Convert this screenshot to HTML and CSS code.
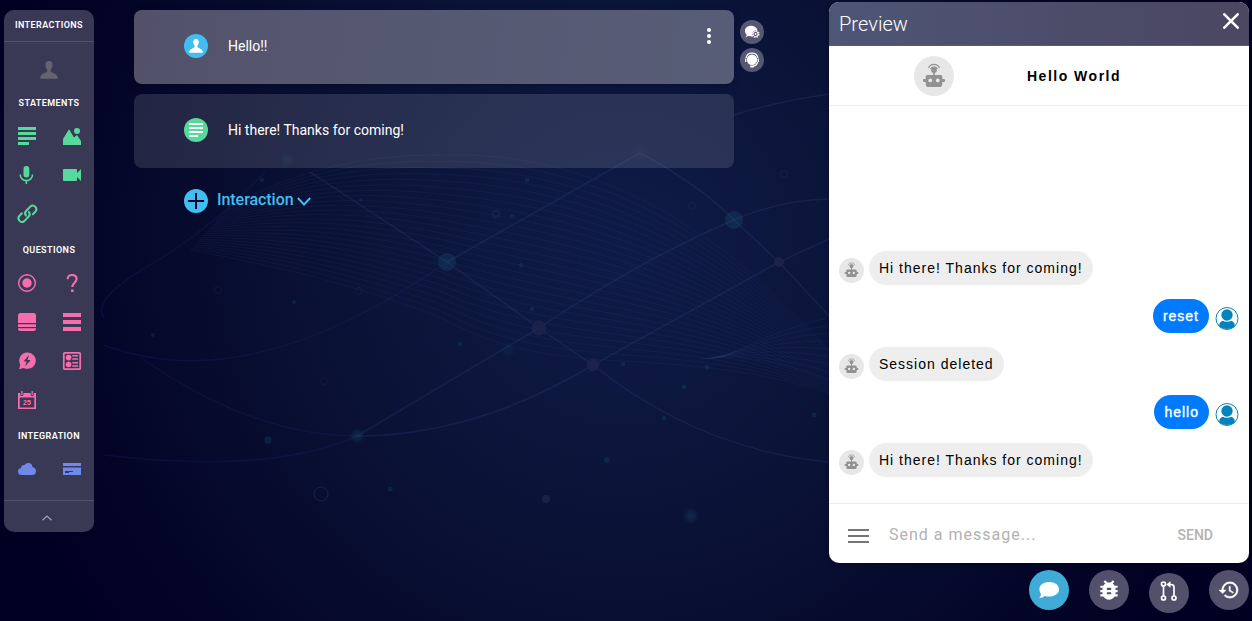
FILE: index.html
```html
<!DOCTYPE html>
<html lang="en">
<head>
<meta charset="utf-8">
<title>Interactions</title>
<link rel="stylesheet" href="styles.css">
</head>
<body>
<svg class="backdrop" viewBox="0 0 1252 621" aria-hidden="true">
  <defs>
    <symbol id="person" viewBox="0 0 18 18"><path d="M9 0C6.400 0 5.300 1.600 5.400 4.200c.1 2 .8 3.400 1.800 4.200.1.900.1 1.900-.4 2.500C5.600 12 .2 12.300.1 17.800h17.800c-.1-5.500-5.500-5.800-6.700-6.900-.5-.6-.5-1.600-.4-2.500 1-.8 1.700-2.200 1.800-4.200C12.700 1.600 11.600 0 9 0z"/></symbol>
    <symbol id="lines" viewBox="0 0 18 18"><path d="M0 0h18v3H0zM0 5h18v3H0zM0 10h18v3H0zM0 15h11v3H0z"/></symbol>
    <symbol id="robot" viewBox="0 0 24 24"><path d="M6.500 5A6 6 0 0 1 17.500 5M8.400 6a4 4 0 0 1 7.200 0" fill="none" stroke="currentColor" stroke-width="1.100"/><circle cx="12" cy="7" r="2.900"/><path d="M11.200 8h1.600v5h-1.600z"/><path fill-rule="evenodd" d="M5.500 12h13q1.800 0 1.800 1.500V16h1.700q1 0 1 .9v1.200q0 .9-1 .9h-1.700v2q0 3.200-3.300 3.200H7q-3.300 0-3.300-3.200v-2H2q-1 0-1-.9v-1.200q0-.9 1-.9h1.700v-2.500Q3.700 12 5.500 12zM8.200 15.500a1.900 1.900 0 1 0 0 3.800 1.900 1.900 0 0 0 0-3.800zM15.800 15.500a1.900 1.900 0 1 0 0 3.800 1.900 1.900 0 0 0 0-3.800z"/></symbol>
    <symbol id="user" viewBox="0 0 24 24"><circle cx="12" cy="12" r="11" fill="#fff" stroke="currentColor" stroke-width="1"/><circle cx="12" cy="8.500" r="5.700"/><path d="M4.300 20.500q-.6-5 3.300-6.300 4.400 2.200 8.800 0 3.900 1.300 3.300 6.300Q16 22.600 12 22.600t-7.700-2.100z"/></symbol>
    <filter id="soft"><feGaussianBlur stdDeviation="2"/></filter>
  </defs>
  <g id="waves" class="waves"></g>
  <g class="orbits">
    <path class="faint" d="M104 318Q90 300 150 265T265 172M104 345Q250 400 447 262"/>
    <path d="M447 262L640 153"/>
    <path d="M310 172L447 262 539 328 593 365Q700 450 829 462"/>
    <path class="faint" d="M140 357Q250 435 357 436"/>
    <path d="M357 436Q475 436 593 365L779 262 829 239"/>
    <path class="faint" d="M104 455Q270 475 357 436"/>
    <path d="M357 436L539 328Q640 260 734 220 780 200 829 199"/>
    <path d="M640 153Q700 185 734 220L779 262 829 316"/>
    <path d="M734 115Q770 103 829 94"/>
  </g>
  <g class="stars">
    <circle cx="447" cy="262" r="9"/><circle cx="734" cy="220" r="9"/>
    <circle cx="357" cy="436" r="6" filter="url(#soft)"/><circle class="dim" cx="508" cy="350" r="6" filter="url(#soft)"/>
    <circle cx="691" cy="516" r="6" filter="url(#soft)"/>
    <circle cx="268" cy="440" r="3.500"/><circle cx="390" cy="489" r="2.500"/><circle cx="294" cy="302" r="2"/>
    <circle cx="153" cy="335" r="2"/><circle cx="607" cy="460" r="2.800"/><circle cx="684" cy="387" r="2.400"/>
    <circle cx="707" cy="367" r="2.400"/><circle cx="532" cy="309" r="2.200"/><circle cx="521" cy="265" r="2"/>
    <circle cx="512" cy="216" r="2"/><circle cx="527" cy="180" r="2.300"/><circle cx="460" cy="344" r="2.200"/>
    <circle cx="623" cy="364" r="2.200"/><circle cx="664" cy="418" r="2.200"/><circle cx="814" cy="415" r="2.400"/>
    <circle cx="262" cy="180" r="2.200"/><circle cx="361" cy="200" r="1.700"/><circle class="dim" cx="287" cy="160" r="6" filter="url(#soft)"/>
  </g>
  <g class="nodes">
    <circle cx="539" cy="328" r="7.500"/><circle cx="593" cy="365" r="6.500"/><circle cx="779" cy="262" r="5"/>
    <circle cx="546" cy="499" r="4.200"/><circle class="dim" cx="640" cy="153" r="7" filter="url(#soft)"/>
  </g>
  <g class="rings">
    <circle class="bright" cx="321" cy="494" r="7"/><circle cx="218" cy="290" r="3.500"/><circle cx="359" cy="291" r="3.500"/>
    <circle cx="324" cy="381" r="3.500"/><circle class="bright" cx="496" cy="214" r="3.500"/><circle cx="692" cy="206" r="3.500"/><circle cx="784" cy="174" r="3.500"/>
  </g>
</svg>

<div class="app">
  <aside class="palette">
    <h2 class="palette-title">INTERACTIONS</h2>
    <div class="palette-user"><svg width="18" height="18"><use href="#person"/></svg></div>
    <h3 class="group-title first">STATEMENTS</h3>
    <div class="group green">
      <svg viewBox="0 0 18 18"><use href="#lines"/></svg>
      <svg viewBox="0 0 18 18"><path d="M0 18v-6L6 2.200 11 10.500l3-2.500 4 6V18z"/><circle cx="14" cy="4" r="3"/></svg>
      <svg viewBox="0 0 18 18"><rect x="5.500" y="0" width="5.800" height="11.500" rx="2.900"/><path d="M2.200 8.500a6.100 6.100 0 0 0 12.300 0M8.350 14.500V18" fill="none" stroke="currentColor" stroke-width="1.600"/></svg>
      <svg viewBox="0 0 18 18"><path d="M1 3h12q1 0 1 1v3l4-4v12l-4-4v3q0 1-1 1H1q-1 0-1-1V4q0-1 1-1z"/></svg>
      <svg viewBox="0 0 18 18"><g fill="none" stroke="currentColor" stroke-width="2" stroke-linecap="round" transform="translate(.4 -.6)"><path d="M7.600 11.200A3.600 3.600 0 0 1 7.900 6.300L12.100 2A3.600 3.600 0 0 1 17.200 7L14.500 9.800"/><path d="M10.400 7.500a3.600 3.600 0 0 1-.3 4.900L5.900 16.700A3.600 3.600 0 0 1 .8 11.700L3.500 8.900"/></g></svg>
    </div>
    <h3 class="group-title">QUESTIONS</h3>
    <div class="group pink">
      <svg viewBox="0 0 18 18"><circle cx="9" cy="9" r="8.300" fill="none" stroke="currentColor" stroke-width="1.400"/><circle cx="9" cy="9" r="4.700"/></svg>
      <svg viewBox="0 0 18 18"><path d="M4.600 5.200C4.600 2.500 6.300 1 9 1s4.600 1.500 4.600 4c0 3.400-4.300 4-4.300 8" fill="none" stroke="currentColor" stroke-width="2.100"/><path d="M8.100 15.500h2.500V18H8.100z"/></svg>
      <svg viewBox="0 0 18 18"><path d="M2.500 0h13Q18 0 18 2.500V10H0V2.500Q0 0 2.500 0zM0 11.300h18V14H0zM0 15.200h18v.8q0 2-2.500 2h-13Q0 18 0 16z"/></svg>
      <svg viewBox="0 0 18 18"><path d="M0 0h18v4H0zM0 7h18v4H0zM0 14h18v4H0z"/></svg>
      <svg viewBox="0 0 18 18"><path fill-rule="evenodd" d="M9.300.4a8.200 8.200 0 1 1-3.500 15.500L1 17.200l1.300-4.500A8.200 8.200 0 0 1 9.300.4zM11 3L5.500 9.500h3.200L7 14.500 12.700 8H9.500z"/></svg>
      <svg viewBox="0 0 18 18"><rect x=".8" y=".8" width="16.400" height="16.400" rx=".8" fill="none" stroke="currentColor" stroke-width="1.700"/><circle cx="5.600" cy="5.600" r="2.800"/><circle cx="5.600" cy="12.500" r="2.800"/><path d="M9.300 3H15v1.600H9.300zM9.300 6.200H15v1.600H9.300zM9.300 10H15v1.600H9.300zM9.300 13.200H15v1.600H9.300z"/></svg>
      <svg viewBox="0 0 18 18"><path fill-rule="evenodd" d="M0 2h2.200v1.700q0 1.300 1.600 1.300t1.600-1.300V2h7.200v1.700q0 1.300 1.600 1.300t1.600-1.300V2H18v16H0zM1.700 6.500v9.900h14.600V6.500z"/><path d="M3.200 0h1.300v4H3.200zM13.500 0h1.300v4h-1.300z"/><text x="9" y="14" class="date">25</text></svg>
    </div>
    <h3 class="group-title">INTEGRATION</h3>
    <div class="group blue">
      <svg viewBox="0 0 18 18"><path d="M4 15Q0 15 0 11.500 0 8.600 3 8q0-3 3.400-3 1-2 4-2Q14 3 14.500 7 18 8 18 11.300 18 15 14 15z"/></svg>
      <svg viewBox="0 0 18 18"><path fill-rule="evenodd" d="M0 3h18v3H0zM0 7.500h18V15H0zM2 12v1h4v-1zM2 11h8v1H2z"/></svg>
    </div>
    <div class="palette-foot"><svg width="10" height="6" viewBox="0 0 10 6"><path d="M.5 5.300L5 1l4.500 4.300" fill="none" stroke="#a3a1ac" stroke-width="1.200"/></svg></div>
  </aside>

  <main class="flow">
    <div class="flow-row">
      <section class="card active">
        <span class="badge cyan"><svg width="14" height="14"><use href="#person"/></svg></span>
        <p class="card-text">Hello!!</p>
        <svg class="more" width="4" height="16" viewBox="0 0 4 16"><circle cx="2" cy="2" r="2"/><circle cx="2" cy="8" r="2"/><circle cx="2" cy="14" r="2"/></svg>
      </section>
      <div class="card-tools">
        <span class="tool"><svg width="16" height="14" viewBox="0 0 16 14"><path d="M7 .8C10.600.8 13.200 3 13.200 5.300q-4-.3-5 2.400-.6 1.700.3 3.600-1.500.3-4-.5L1.700 12.600l1-2.600Q1 8.500 1 6C1 3 3.400.8 7 .8z"/><g fill="none" stroke="#fff"><circle cx="11.500" cy="9" r="3.400" stroke-width="1.300" stroke-dasharray="1.500 1.170"/><circle cx="11.500" cy="9" r="2.600"/></g><circle cx="11.500" cy="9" r="1"/></svg></span>
        <span class="tool"><svg width="16" height="16" viewBox="0 0 16 16"><circle cx="8" cy="7.800" r="5.200"/><path d="M1.700 10V6.500M2 6Q3 1.200 8 1.200t6 4.800M14.300 6.500V10M13.800 10Q12.800 13.800 8.500 14.500" fill="none" stroke="#fff" stroke-width="1.200"/><rect x="6" y="13.600" width="4" height="2" rx="1"/></svg></span>
      </div>
    </div>
    <section class="card">
      <span class="badge green-bg"><svg width="16" height="15" viewBox="0 0 16 15"><path d="M1 0h14v2H1zM1 4h14v2H1zM1 8h14v2H1zM1 12h9v2H1z"/></svg></span>
      <p class="card-text">Hi there! Thanks for coming!</p>
    </section>
    <div class="add">
      <span class="badge cyan"><svg width="16" height="16" viewBox="0 0 16 16"><path d="M0 8h16M8 0v16" stroke="#050624" stroke-width="2"/></svg></span>
      <span class="add-text">Interaction</span>
      <svg width="14" height="9" viewBox="0 0 14 9"><path d="M.8 1L7 7.500 13.200 1" fill="none" stroke="#41bef0" stroke-width="1.900"/></svg>
    </div>
  </main>

  <div class="side">
    <section class="preview">
      <header class="preview-head"><h1>Preview</h1><svg width="16" height="16" viewBox="0 0 16 16"><path d="M1.300 1.300l13.400 13.400M14.700 1.300L1.300 14.700" stroke="#fff" stroke-width="2.600" stroke-linecap="round"/></svg></header>
      <div class="bot-bar"><span class="bot large"><svg><use href="#robot"/></svg></span><strong>Hello World</strong></div>
      <div class="chat">
        <div class="msg"><span class="bot"><svg><use href="#robot"/></svg></span><p>Hi there! Thanks for coming!</p></div>
        <div class="msg mine"><p>reset</p><svg class="me"><use href="#user"/></svg></div>
        <div class="msg"><span class="bot"><svg><use href="#robot"/></svg></span><p>Session deleted</p></div>
        <div class="msg mine"><p>hello</p><svg class="me"><use href="#user"/></svg></div>
        <div class="msg"><span class="bot"><svg><use href="#robot"/></svg></span><p>Hi there! Thanks for coming!</p></div>
      </div>
      <footer class="composer"><svg width="21" height="16" viewBox="0 0 21 16"><path d="M0 1h21v2H0zM0 7h21v2H0zM0 13h21v2H0z"/></svg><span class="placeholder">Send a message...</span><span class="send">SEND</span></footer>
    </section>
    <nav class="fabs">
      <span class="fab on"><svg width="20" height="18" viewBox="0 0 20 18"><path d="M10.200 1C15.800 1 20 4 20 8.300s-4.200 7.300-9.800 7.300q-2.200 0-4.200-.7-2.500 2-5.800 2.100 1.800-2 1.800-3.900Q.4 11.200.4 8.300C.4 4 4.600 1 10.200 1z"/></svg></span>
      <span class="fab"><svg width="26" height="26" viewBox="0 0 24 24"><path d="M20 8h-2.810a5.985 5.985 0 0 0-1.820-1.960L17 4.410 15.590 3l-2.170 2.170a6.002 6.002 0 0 0-2.830 0L8.410 3 7 4.410l1.620 1.630C7.880 6.550 7.260 7.220 6.810 8H4v2h2.090c-.05.33-.09.66-.09 1v1H4v2h2v1c0 .34.04.67.09 1H4v2h2.810c1.040 1.790 2.970 3 5.190 3s4.150-1.210 5.190-3H20v-2h-2.090c.05-.33.09-.66.09-1v-1h2v-2h-2v-1c0-.34-.04-.67-.09-1H20V8zm-6 8h-4v-2h4v2zm0-4h-4v-2h4v2z"/></svg></span>
      <span class="fab low"><svg width="18" height="20" viewBox="0 0 18 20"><g fill="none" stroke="#fff" stroke-width="1.700"><circle cx="3.500" cy="3" r="2"/><circle cx="3.500" cy="17" r="2"/><circle cx="14" cy="17" r="2"/><path d="M3.500 5v10M14 15V6q0-2.500-3-2.500H9"/></g><path d="M6.300 3.500L10.500.2v6.600z"/></svg></span>
      <span class="fab"><svg width="22" height="24" viewBox="0 0 24 24"><path d="M13 3a9 9 0 0 0-9 9H1l3.890 3.890.07.14L9 12H6c0-3.870 3.130-7 7-7s7 3.130 7 7-3.130 7-7 7c-1.930 0-3.680-.79-4.940-2.060l-1.420 1.420A8.954 8.954 0 0 0 13 21a9 9 0 0 0 0-18zm-1 5v5l4.280 2.540.72-1.210-3.500-2.080V8H12z" stroke="#fff" stroke-width=".4"/></svg></span>
    </nav>
  </div>
</div>
<script src="waves.js"></script>
</body>
</html>
```

FILE: styles.css
```css
* { box-sizing: border-box; margin: 0; padding: 0; }
body { width: 1252px; height: 621px; overflow: hidden; font-family: Roboto, "Liberation Sans", sans-serif; color: #fff; background: radial-gradient(circle at 620px 250px, #0f1b47 0, #0c163c 190px, #080e31 380px, #030527 540px, #020022 640px); }
svg { display: block; fill: currentColor; }
.backdrop { position: absolute; inset: 0; width: 1252px; height: 621px; z-index: -1; }
.waves { fill: none; stroke: #4455a0; stroke-opacity: .1; stroke-width: 1; }
.orbits { fill: none; stroke: #5060a5; stroke-opacity: .17; stroke-width: 1.500; }
.orbits .faint { stroke: #3038a0; stroke-opacity: .17; }
.stars { fill: #15577a; fill-opacity: .27; }
.nodes { fill: #1d2249; fill-opacity: .9; }
.dim { opacity: .45; }
.rings { fill: none; stroke: #4d5789; stroke-opacity: .13; }
.rings .bright { stroke-opacity: .28; }

.app { display: flex; height: 621px; padding-left: 4px; }
.palette { width: 90px; height: 522px; margin-top: 10px; border-radius: 10px; background: #3a3955; overflow: hidden; }
.palette-title { height: 32px; line-height: 30px; border-bottom: 1px solid #535268; }
.palette-title, .group-title { font-size: 9px; font-weight: 600; letter-spacing: .42px; text-align: center; }
.palette-user { height: 48px; padding-top: 19px; display: flex; justify-content: center; color: #64636f; }
.group-title { height: 30px; line-height: 33px; }
.group-title.first { height: 27px; line-height: 27px; }
.group { display: grid; grid-template-columns: 45px 45px; grid-auto-rows: 39px; justify-items: start; padding-left: 14px; }
.group svg { width: 18px; height: 18px; margin-top: 10px; overflow: visible; }
.green { color: #56d99a; }
.pink { color: #f76eaf; }
.blue { color: #7088e9; }
.date { font: 700 7px "Liberation Sans", sans-serif; text-anchor: middle; }
.palette-foot { height: 32px; margin-top: 11px; border-top: 1px solid #535268; display: flex; justify-content: center; padding: 14px 4px 0 0; }

.flow { width: 640px; margin-left: 40px; padding-top: 10px; display: flex; flex-direction: column; gap: 10px; }
.flow-row { display: flex; gap: 6px; }
.card { width: 600px; height: 74px; flex: none; display: flex; align-items: center; gap: 20px; padding: 0 23px 2px 50px; border-radius: 8px; background: rgba(255, 255, 255, .12); }
.card.active { background: linear-gradient(100deg, #53516a, #555871 40%, #585d77); box-shadow: 0 2px 7px rgba(0, 0, 20, .3); }
.card-text { flex: 1; font-size: 14px; }
.more { align-self: flex-start; margin-top: 18px; }
.badge { width: 24px; height: 24px; border-radius: 50%; display: flex; align-items: center; justify-content: center; flex: none; }
.cyan { background: #41bdf1; }
.green-bg { background: #56d99a; }
.card-tools { display: flex; flex-direction: column; gap: 4px; padding-top: 10px; }
.tool { width: 24px; height: 24px; border-radius: 50%; background: #565873; display: flex; align-items: center; justify-content: center; }
.add { display: flex; align-items: center; padding: 11px 0 0 50px; color: #41bef0; }
.add-text { margin: -3px 3px 0 9px; font-size: 16px; font-weight: 500; letter-spacing: -.05px; }

.side { margin-left: auto; margin-right: 3px; width: 420px; }
.preview { height: 561px; margin-top: 2px; display: flex; flex-direction: column; border-radius: 10px; overflow: hidden; color: #000; background: #fff; box-shadow: 0 0 5px rgba(0, 0, 0, .4); }
.preview-head { height: 44px; flex: none; display: flex; justify-content: space-between; padding: 11px 10px 0; color: #fff; background: linear-gradient(90deg, #4e5675, #4c4b68 65%, #4b4763); border-bottom: 1px solid #5a5a73; }
.preview-head h1 { font-size: 20px; line-height: 23px; font-weight: 300; letter-spacing: .05px; }
.bot-bar { height: 60px; flex: none; display: flex; align-items: center; padding-left: 85px; border-bottom: 1px solid #ececec; font: 14px "Liberation Sans", sans-serif; letter-spacing: 1.500px; }
.bot-bar strong { margin-left: 73px; }
.bot { width: 25px; height: 25px; border-radius: 50%; background: #e7e7e7; color: #929292; display: flex; align-items: center; justify-content: center; flex: none; }
.bot svg { width: 15px; height: 15px; margin-top: -2px; overflow: visible; }
.bot.large { width: 40px; height: 40px; }
.bot.large svg { width: 24px; height: 24px; margin-top: -2px; }
.chat { flex: 1; display: flex; flex-direction: column; justify-content: flex-end; gap: 14px; padding: 0 10px 26px; font: 14px "Liberation Sans", sans-serif; letter-spacing: 1px; }
.msg { display: flex; height: 34px; gap: 5px; }
.msg p { height: 34px; line-height: 34px; padding: 0 10px; border-radius: 17px; background: #eee; }
.msg .bot { margin-top: 7px; }
.mine { justify-content: flex-end; gap: 6px; }
.msg.mine p { background: #007bff; color: #fff; -webkit-text-stroke: .35px #fff; }
.me { width: 24px; height: 25px; margin-top: 7px; color: #0582bd; }
.composer { height: 60px; flex: none; display: flex; align-items: center; border-top: 1px solid #ececec; padding: 5px 36px 0 19px; color: #757575; }
.placeholder { margin: -3px auto 0 20px; font-size: 16px; letter-spacing: 1px; color: #b2b2b2; }
.send { margin-top: -3px; font-size: 14px; font-weight: 500; color: #b2b2b2; }
.fabs { display: flex; justify-content: flex-end; gap: 20px; padding-top: 7px; }
.fab { width: 40px; height: 40px; border-radius: 50%; background: #52506b; display: flex; align-items: center; justify-content: center; }
.fab.on { background: #41abd7; }
.fab.low { margin-top: 3px; }
.fab.low svg { margin-top: -4px; }
```

FILE: waves.js
```js
// Blends each wave between an upper and a lower boundary curve.
const ns = "http://www.w3.org/2000/svg";
const group = document.getElementById("waves");

function blend(a, b, count) {
  for (let i = 0; i < count; i++) {
    const t = i / (count - 1);
    const p = a.map((v, k) => (v + (b[k] - v) * t).toFixed(1));
    const path = document.createElementNS(ns, "path");
    path.setAttribute("d", `M${p[0]} ${p[1]}C${p.slice(2).join(" ")}`);
    group.appendChild(path);
  }
}

blend(
  [230, 205, 300, 170, 360, 155, 440, 155, 580, 150, 710, 215, 829, 350],
  [190, 250, 270, 265, 340, 280, 440, 317, 560, 385, 660, 340, 829, 393], 26
);
blend([720, 358, 750, 345, 790, 325, 829, 318], [700, 359, 750, 353, 790, 365, 829, 380], 9);
```
